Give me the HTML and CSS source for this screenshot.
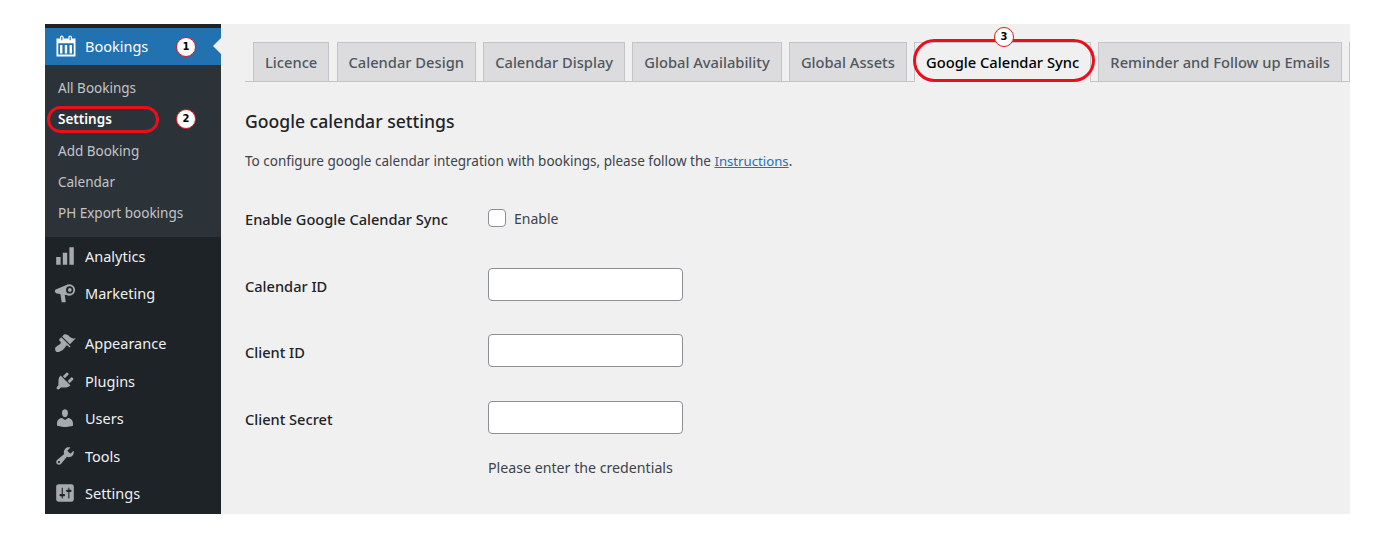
FILE: index.html
```html
<!DOCTYPE html>
<html lang="en">
<head>
<meta charset="utf-8">
<title>Google calendar settings</title>
<link rel="stylesheet" href="styles.css">
</head>
<body>
<div class="frame">
  <nav class="sidebar">
    <div class="menu-current">
      <svg class="icon icon-white" viewBox="1.5 1 17 18.5"><path d="M15 4h3v15H2V4h3V3c0-.8.7-1.500 1.500-1.500S8 2.200 8 3v1h4V3c0-.8.7-1.500 1.500-1.500S15 2.200 15 3zM6.500 5.500c.3 0 .5-.2.500-.5V2.900c0-.3-.2-.4-.5-.4s-.5.1-.5.4V5c0 .3.2.5.5.5zm7 0c.3 0 .5-.2.500-.5V2.900c0-.3-.2-.4-.5-.4s-.5.1-.5.4V5c0 .3.2.5.5.5zM3.500 8v9.500h13V8zM5 9.500h2v7H5zm4 0h2v7H9zm4 0h2v7h-2z" fill-rule="evenodd"/></svg>
      <span>Bookings</span>
      <span class="pointer"></span>
    </div>
    <ul class="submenu">
      <li>All Bookings</li>
      <li class="active">Settings</li>
      <li>Add Booking</li>
      <li>Calendar</li>
      <li>PH Export bookings</li>
    </ul>
    <ul class="menu">
      <li><svg class="icon" viewBox="0 0 20 20"><path d="M18 18V2h-4v16h4zm-6 0V7H8v11h4zm-6 0v-7H2v7h4z"/></svg>Analytics</li>
      <li><svg class="icon" viewBox="0 0 20 20"><path d="M1.500 6.800 12.500 2.300 14 12.300l-4.200-.7.900 6.900H7L5.800 11l-3.300-.6C.6 10 .3 7.400 1.500 6.800z"/><circle cx="14" cy="7.200" r="5.200"/><circle class="icon-hole" cx="14.200" cy="7.200" r="3.300"/><circle cx="14.400" cy="7.200" r="1.700"/></svg>Marketing</li>
      <li class="gap"><svg class="icon" viewBox="0 0 20 20"><path d="M14.480 11.060L7.410 3.990l1.500-1.500c.5-.56 2.300-.47 3.510.32 1.210.8 1.430 1.280 2.910 2.100 1.180.64 2.450 1.260 4.450.85zm-.71.71L6.700 4.700 4.930 6.470c-.39.39-.39 1.020 0 1.410l1.060 1.060c.39.39.39 1.030 0 1.420-.6.6-1.430 1.110-2.210 1.690-.35.26-.7.53-1.010.84C1.430 13.230 1 14.390 1 15.500c0 .95.38 1.970 1.080 2.420.7.45 1.980.4 2.920.08 1.110-.43 2.270-.89 3.610-2.230.31-.31.58-.66.84-1.010.58-.78 1.090-1.610 1.690-2.210.39-.39 1.030-.39 1.420 0l1.060 1.060c.39.39 1.020.39 1.410 0z"/></svg>Appearance</li>
      <li><svg class="icon" viewBox="0 0 20 20"><path d="M13.110 4.360L9.870 7.600 8 5.730l3.240-3.240c.35-.34 1.050-.2 1.560.32.52.51.66 1.210.31 1.550zm-8 1.770l.91-1.120 9.010 9.010-1.190.84c-.71.71-2.630 1.160-3.820 1.160H6.140L4.900 17.260c-.59.59-1.540.59-2.120 0-.59-.58-.59-1.530 0-2.120l1.240-1.240v-3.880c0-1.130.4-3.190 1.090-3.890zm7.260 3.970l3.240-3.240c.34-.35 1.040-.21 1.550.31.52.51.66 1.210.31 1.550l-3.240 3.250z"/></svg>Plugins</li>
      <li><svg class="icon" viewBox="0 0 20 20"><path d="M10 9.250c-2.270 0-2.730-3.440-2.730-3.440C7 4.020 7.820 2 9.970 2c2.160 0 2.980 2.020 2.710 3.810 0 0-.41 3.440-2.680 3.440zm0 2.570L12.720 10c2.390 0 4.520 2.330 4.520 4.530v2.490s-3.650 1.130-7.240 1.130c-3.650 0-7.240-1.130-7.240-1.130v-2.490c0-2.250 1.940-4.480 4.470-4.480z"/></svg>Users</li>
      <li><svg class="icon" viewBox="0 0 20 20"><path d="M16.680 9.770c-1.340 1.340-3.300 1.670-4.950.99l-5.410 6.520c-.99.99-2.590.99-3.580 0s-.99-2.590 0-3.570l6.520-5.420c-.68-1.650-.35-3.610.99-4.950 1.280-1.280 3.120-1.620 4.720-1.060l-2.890 2.890 2.820 2.820 2.860-2.870c.53 1.580.18 3.390-1.080 4.650zM3.810 16.210c.4.39 1.040.39 1.430 0 .4-.4.4-1.040 0-1.430-.39-.4-1.030-.4-1.430 0-.39.39-.39 1.030 0 1.430z"/></svg>Tools</li>
      <li><svg class="icon" viewBox="0 0 20 20"><path d="M18 16V4c0-1.100-.9-2-2-2H4c-1.100 0-2 .9-2 2v12c0 1.100.9 2 2 2h12c1.100 0 2-.9 2-2zM8 11h1c.55 0 1 .45 1 1s-.45 1-1 1H8v1.500c0 .28-.22.5-.5.5s-.5-.22-.5-.5V13H6c-.55 0-1-.45-1-1s.45-1 1-1h1V5.500c0-.28.22-.5.5-.5s.5.22.5.5V11zm5-2h-1c-.55 0-1-.45-1-1s.45-1 1-1h1V5.500c0-.28.22-.5.5-.5s.5.22.5.5V7h1c.55 0 1 .45 1 1s-.45 1-1 1h-1v5.500c0 .28-.22.5-.5.5s-.5-.22-.5-.5V9z"/></svg>Settings</li>
    </ul>
    <span class="badge badge-one">1</span>
    <span class="badge badge-two">2</span>
    <span class="oval oval-settings"></span>
  </nav>
  <main class="content">
    <div class="tabs">
      <a class="tab">Licence</a>
      <a class="tab">Calendar Design</a>
      <a class="tab">Calendar Display</a>
      <a class="tab">Global Availability</a>
      <a class="tab">Global Assets</a>
      <a class="tab tab-active">Google Calendar Sync</a>
      <a class="tab">Reminder and Follow up Emails</a>
      <a class="tab tab-cut"></a>
      <span class="oval oval-tab"></span>
      <span class="badge badge-three">3</span>
    </div>
    <h2 class="title">Google calendar settings</h2>
    <p class="intro">To configure google calendar integration with bookings, please follow the <a class="link">Instructions</a>.</p>
    <div class="form">
      <div class="row row-check">
        <span class="label">Enable Google Calendar Sync</span>
        <span class="check-wrap"><span class="checkbox"></span><span class="check-text">Enable</span></span>
      </div>
      <div class="row row-field"><span class="label label-field">Calendar ID</span><span class="input"></span></div>
      <div class="row row-field"><span class="label label-field">Client ID</span><span class="input"></span></div>
      <div class="row row-field"><span class="label label-field">Client Secret</span><span class="input"></span></div>
      <p class="hint">Please enter the credentials</p>
    </div>
  </main>
</div>
</body>
</html>
```
FILE: styles.css
```css
* { box-sizing: border-box; }
html, body { margin: 0; padding: 0; background: #fff; }
body { font-family: "Noto Sans", "Open Sans", sans-serif; font-size: 14px; color: #3c434a; }
ul { list-style: none; margin: 0; padding: 0; }
.frame { display: flex; width: 1305px; height: 490px; margin: 24px 0 0 45px; background: #f0f0f1; overflow: hidden; }

.sidebar { position: relative; flex: 0 0 176px; background: #1d2327; padding-top: 4px; color: #f0f0f1; }
.menu-current { position: relative; display: flex; align-items: center; height: 37px; padding: 0 0 2px 10px; background: #2271b1; color: #fff; font-size: 14.5px; }
.icon { flex: 0 0 22px; width: 22px; height: 22px; margin-right: 9px; fill: #a7aaad; }
.icon-white { margin-right: 8px; fill: #fff; }
.icon-hole { fill: #1d2327; }
.pointer { position: absolute; right: 0; top: 10px; border: 8px solid transparent; border-right-color: #f0f0f1; border-left-width: 0; }
.submenu { background: #2c3338; height: 172px; padding-top: 8px; color: #c3c4c7; font-size: 13.5px; }
.submenu li { height: 31.25px; line-height: 31.25px; padding-left: 13px; }
.submenu .active { color: #fff; font-weight: 600; }
.menu li { display: flex; align-items: center; height: 37.5px; padding-left: 9px; font-size: 14.5px; }
.menu .gap { margin-top: 12.5px; }

.badge { position: absolute; width: 20px; height: 20px; border: 1px solid #e1141c; border-radius: 50%; background: #fff; color: #000; font-family: "DejaVu Sans", sans-serif; font-size: 10px; font-weight: 700; line-height: 18px; text-align: center; }
.badge-one { left: 131px; top: 13px; }
.badge-two { left: 131px; top: 85px; }
.badge-three { left: 749px; top: 3px; }
.oval { position: absolute; border: 3px solid #ea0f1b; border-radius: 16px; }
.oval-settings { left: 2px; top: 82px; width: 112px; height: 27px; }

.content { flex: 1; padding: 0 0 0 24px; min-width: 0; }
.tabs { position: relative; display: flex; align-items: flex-start; gap: 7.2px; height: 58px; padding: 18px 0 0 8px; border-bottom: 1px solid #c3c4c7; }
.tab { display: block; flex: none; height: 39px; padding: 0 11px; border: 1px solid #c3c4c7; border-bottom: 0; background: #dcdcde; color: #50575e; font-size: 14.7px; font-weight: 500; line-height: 39px; white-space: nowrap; }
.tab-active { height: 40px; background: #f0f0f1; color: #000; }
.tab-cut { width: 30px; padding: 0; }
.oval-tab { left: 668px; top: 15px; width: 182px; height: 43px; border-radius: 22px; }

.title { margin: 27px 0 0; color: #1d2327; font-size: 17.6px; font-weight: 500; line-height: 24px; }
.intro { margin: 18px 0 0; font-size: 13.5px; line-height: 20px; }
.link { color: #2271b1; font-size: 13.2px; text-decoration: underline; }

.row { display: flex; align-items: center; }
.label { flex: 0 0 243px; color: #1d2327; font-size: 14.6px; font-weight: 500; }
.label-field { padding-top: 3px; }
.row-check { height: 30px; margin-top: 33px; }
.row-field { height: 33px; margin-top: 33.5px; }
.check-wrap { display: flex; align-items: center; gap: 8px; margin-top: -2px; }
.checkbox { width: 18px; height: 18px; border: 1px solid #8c8f94; border-radius: 4px; background: #fff; }
.check-text { font-size: 14px; }
.input { width: 195px; height: 33px; border: 1px solid #8c8f94; border-radius: 4px; background: #fff; }
.hint { margin: 24px 0 0 243px; font-size: 14.2px; line-height: 20px; }
```
